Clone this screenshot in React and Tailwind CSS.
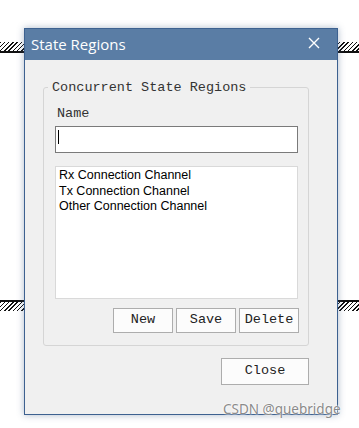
import React from "react";

const mono = { fontFamily: '"Liberation Mono", "DejaVu Sans Mono", monospace' };

function Hatch({ top, lineTop }) {
  return (
    <div className={"absolute left-0 right-0 " + top}>
      {lineTop && <div className="h-[2px] bg-[#111]" />}
      <div className="h-[9px] bg-[repeating-linear-gradient(135deg,#111_0px,#111_1px,transparent_1px,transparent_3px)]" />
      {!lineTop && <div className="h-[2px] bg-[#111]" />}
    </div>
  );
}

function Btn({ children, className = "" }) {
  return (
    <div
      className={
        "flex items-center justify-center border border-[#adadad] bg-[#fcfcfc] text-[13.5px] text-[#222] " +
        className
      }
      style={mono}
    >
      {children}
    </div>
  );
}

export default function App() {
  return (
    <div
      className="relative w-[359px] h-[428px] overflow-hidden bg-white pt-[28px] pl-[24px]"
      style={{ fontFamily: '"Liberation Sans", Arial, sans-serif' }}
    >
      <Hatch top="top-[42px]" lineTop={false} />
      <Hatch top="top-[300px]" lineTop={true} />

      <div className="relative z-10 flex h-[387px] w-[314px] flex-col border border-[#3d6190] bg-[#f0f0f0] shadow-[0_0_7px_rgba(70,100,140,0.45)]">
        <div className="flex h-[31px] items-center justify-between bg-[#5a7da5] pl-[6px] pr-[17px]">
          <span className="text-[15px] text-white" style={{ fontFamily: '"Open Sans", "Noto Sans", sans-serif' }}>
            State Regions
          </span>
          <svg width="12" height="12" viewBox="0 0 12 12" className="-mt-[4px]">
            <path d="M1 1 L11 11 M11 1 L1 11" stroke="white" strokeWidth="1.4" />
          </svg>
        </div>

        <fieldset className="ml-[18px] mr-[28px] mt-[20px] rounded-[3px] border border-[#d5d5d5]">
          <legend
            className="ml-[4px] px-[4px] text-[13.5px] leading-[15px] text-[#333]"
            style={mono}
          >
            Concurrent State Regions
          </legend>
          <div className="flex flex-col pb-[12px] pl-[11px] pr-[10px]">
            <div className="mt-[11px] pl-[2px] text-[13.5px] leading-[16px] text-[#333]" style={mono}>
              Name
            </div>
            <div className="mt-[4px] flex h-[27px] items-start border border-[#7a7a7a] bg-white pl-[2px] pt-[3px]">
              <span className="h-[14px] w-px bg-black" />
            </div>
            <div className="mt-[13px] flex h-[133px] flex-col border border-[#d9d9d9] bg-white pl-[3px] pt-[1px] text-[12.5px] leading-[15.5px] text-black">
              <span>Rx Connection Channel</span>
              <span>Tx Connection Channel</span>
              <span>Other Connection Channel</span>
            </div>
            <div className="-mr-[1px] mt-[9px] flex justify-end gap-[3px]">
              <Btn className="h-[25px] w-[60px]">New</Btn>
              <Btn className="h-[25px] w-[60px]">Save</Btn>
              <Btn className="h-[25px] w-[60px]">Delete</Btn>
            </div>
          </div>
        </fieldset>

        <div className="mr-[28px] mt-[12px] flex justify-end">
          <Btn className="h-[27px] w-[88px]">Close</Btn>
        </div>
      </div>

      <div
        className="absolute left-[223px] top-[400px] z-20 text-[13.5px] leading-[18px] text-[#8a8a8a] [text-shadow:0_0_2px_#fff,0_0_2px_#fff]"
        style={{ fontFamily: '"Noto Sans", "Liberation Sans", sans-serif' }}
      >
        CSDN @quebridge
      </div>
    </div>
  );
}
